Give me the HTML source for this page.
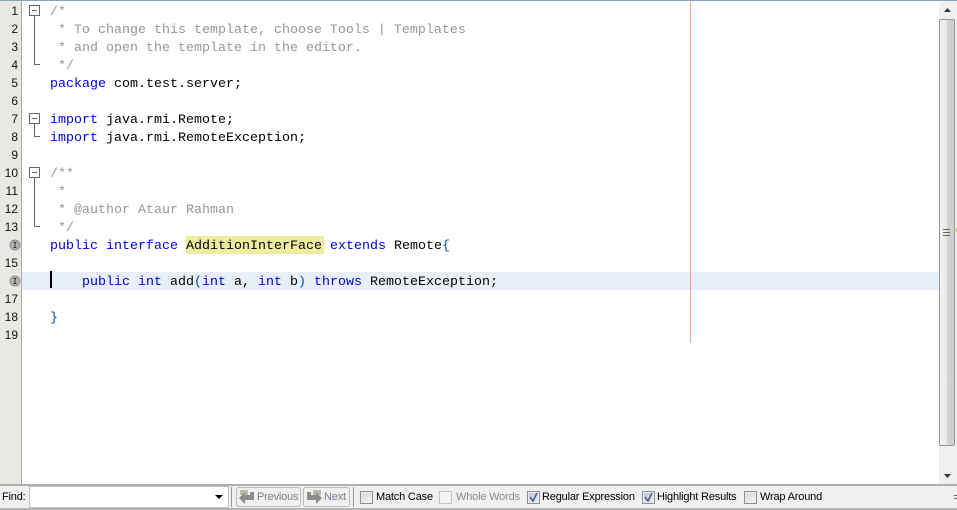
<!DOCTYPE html>
<html><head><meta charset="utf-8">
<style>
html,body{margin:0;padding:0;width:957px;height:510px;overflow:hidden;background:#fff}
#r{position:relative;width:957px;height:510px;overflow:hidden}
.a{position:absolute}
.l{position:absolute;left:50px;height:18px;font:13.333px/18px "Liberation Mono",monospace;white-space:pre;color:#000}
.n{position:absolute;left:0;width:18px;text-align:right;font:12px/18px "Liberation Sans",sans-serif;color:#111}
.k{color:#0000e6}.c{color:#969696}.p{color:#0050a0}
.t{position:absolute;top:490px;font:11px/14px "Liberation Sans",sans-serif;letter-spacing:-.18px;color:#000;white-space:pre}
.cb{position:absolute;top:491px;width:11px;height:11px;border:1px solid #8e8f8f;background:linear-gradient(135deg,#d4d4d2,#f6f6f6);box-shadow:inset 0 0 0 1px #ececec}
.on{background:linear-gradient(135deg,#b9c4da,#e9edf5)}
</style></head><body><div id="r">
<div class="a" style="left:0;top:0;width:957px;height:1px;background:#8aa3bd"></div>
<div class="a" style="left:0;top:1px;width:21px;height:483px;background:#e9e9e4"></div>
<div class="a" style="left:21px;top:1px;width:1px;height:483px;background:#a9a9a5"></div>
<div class="a" style="left:22px;top:272px;width:917px;height:18px;background:#e9eff8"></div>
<div class="a" style="left:690px;top:1px;width:1px;height:342px;background:#ff9a9a"></div>
<div class="a" style="left:186px;top:236px;width:138px;height:18px;background:#eded9f"></div>
<div class="a" style="left:50px;top:271px;width:2px;height:17px;background:#000"></div>

<div class="n" style="top:2px">1</div><div class="n" style="top:20px">2</div><div class="n" style="top:38px">3</div><div class="n" style="top:56px">4</div><div class="n" style="top:74px">5</div><div class="n" style="top:92px">6</div><div class="n" style="top:110px">7</div><div class="n" style="top:128px">8</div><div class="n" style="top:146px">9</div><div class="n" style="top:164px">10</div><div class="n" style="top:182px">11</div><div class="n" style="top:200px">12</div><div class="n" style="top:218px">13</div><div class="n" style="top:254px">15</div><div class="n" style="top:290px">17</div><div class="n" style="top:308px">18</div><div class="n" style="top:326px">19</div>

<svg class="a" style="left:0;top:0" width="50" height="300" shape-rendering="crispEdges">
<g fill="none" stroke="#666">
<rect x="29.500" y="5.500" width="10" height="10" fill="#fff"/><path d="M32 10.500h5M34.500 16v48.500H40"/>
<rect x="29.500" y="113.500" width="10" height="10" fill="#fff"/><path d="M32 118.500h5M34.500 124v12.500H40"/>
<rect x="29.500" y="167.500" width="10" height="10" fill="#fff"/><path d="M32 172.500h5M34.500 178v48.500H40"/>
</g></svg>
<svg class="a" style="left:0;top:0" width="22" height="300">
<g><circle cx="15" cy="245" r="5" fill="#b4b4b4" stroke="#8a8a8a"/><path d="M13.500 242.500h3M15 242.500v5M13.500 247.500h3" stroke="#333" fill="none"/>
<circle cx="15" cy="281" r="5" fill="#b4b4b4" stroke="#8a8a8a"/><path d="M13.500 278.500h3M15 278.500v5M13.500 283.500h3" stroke="#333" fill="none"/></g></svg>

<div class="l c" style="top:4px">/*</div>
<div class="l c" style="top:22px"> * To change this template, choose Tools | Templates</div>
<div class="l c" style="top:40px"> * and open the template in the editor.</div>
<div class="l c" style="top:58px"> */</div>
<div class="l" style="top:76px"><span class="k">package</span> com.test.server;</div>
<div class="l" style="top:112px"><span class="k">import</span> java.rmi.Remote;</div>
<div class="l" style="top:130px"><span class="k">import</span> java.rmi.RemoteException;</div>
<div class="l c" style="top:166px">/**</div>
<div class="l c" style="top:184px"> *</div>
<div class="l c" style="top:202px"> * @author Ataur Rahman</div>
<div class="l c" style="top:220px"> */</div>
<div class="l" style="top:238px"><span class="k">public interface</span> AdditionInterFace <span class="k">extends</span> Remote<span class="p">{</span></div>
<div class="l" style="top:274px">    <span class="k">public int</span> add<span class="p">(</span><span class="k">int</span> a, <span class="k">int</span> b<span class="p">)</span> <span class="k">throws</span> RemoteException;</div>
<div class="l p" style="top:310px">}</div>

<!-- scrollbar -->
<div class="a" style="left:939px;top:1px;width:18px;height:483px;background:#f0f0f0"></div>
<div class="a" style="left:939px;top:19px;width:16px;height:427px;box-sizing:border-box;border:1px solid #979797;border-radius:2px;background:linear-gradient(90deg,#f1f1f1 0,#ebebeb 45%,#d2d2d4 55%,#cfcfd1 100%)"></div>
<div class="a" style="left:943px;top:229px;width:7px;height:1px;background:#666"></div>
<div class="a" style="left:943px;top:232px;width:7px;height:1px;background:#666"></div>
<div class="a" style="left:943px;top:235px;width:7px;height:1px;background:#666"></div>
<svg class="a" style="left:939px;top:0" width="18" height="484">
<path d="M5 12h7l-3.500-4z" fill="#333"/><path d="M5 474h7l-3.500 4z" fill="#333"/></svg>
<div class="a" style="left:956px;top:228px;width:1px;height:4px;background:#c4c44a"></div>

<!-- find bar -->
<div class="a" style="left:0;top:484px;width:957px;height:26px;background:#f0f0f0"></div>
<div class="a" style="left:0;top:484px;width:957px;height:2px;background:#b0b0b0"></div>
<div class="a" style="left:0;top:508px;width:957px;height:2px;background:#b4b4b4"></div>
<div class="t" style="left:2px">Find:</div>
<div class="a" style="left:29px;top:486px;width:200px;height:22px;box-sizing:border-box;background:#fff;border:1px solid #c0c0c0"></div>
<svg class="a" style="left:215px;top:494px" width="10" height="6"><path d="M0 1h8L4 5z" fill="#000"/></svg>
<div class="a" style="left:231px;top:487px;width:1px;height:20px;background:#999"></div>
<div class="a" style="left:353px;top:487px;width:1px;height:20px;background:#999"></div>
<div class="a" style="left:236px;top:487px;width:65px;height:20px;box-sizing:border-box;border:1px solid #bbb;border-radius:3px"></div>
<div class="a" style="left:303px;top:487px;width:47px;height:20px;box-sizing:border-box;border:1px solid #bbb;border-radius:3px"></div>
<svg class="a" style="left:238px;top:488px" width="18" height="18"><path d="M2 2h8v5H2z" fill="#b3bda8"/><path d="M1 10l6-6v3h5V4h4v8h-5v0H7v4z" fill="#8c8c8c"/></svg>
<svg class="a" style="left:305px;top:488px" width="18" height="18"><path d="M8 2h8v5H8z" fill="#b3bda8"/><path d="M17 10l-6-6v3H6V4H2v8h5v0h4v4z" fill="#8c8c8c"/></svg>
<div class="t" style="left:257px;color:#7d7d8c">Previous</div>
<div class="t" style="left:324px;color:#7d7d8c">Next</div>

<div class="cb" style="left:360px"></div><div class="t" style="left:376px">Match Case</div>
<div class="cb" style="left:439px;border-color:#c4c4c4;background:#f4f4f4;box-shadow:none"></div><div class="t" style="left:456px;color:#8a8a8a">Whole Words</div>
<div class="cb on" style="left:527px"></div><div class="t" style="left:542px">Regular Expression</div>
<div class="cb on" style="left:642px"></div><div class="t" style="left:657px">Highlight Results</div>
<div class="cb" style="left:744px"></div><div class="t" style="left:760px">Wrap Around</div>
<svg class="a" style="left:527px;top:491px" width="130" height="13"><path d="M3 6l3 4 4-8" fill="none" stroke="#4a5f8c" stroke-width="1.600"/><path d="M118 6l3 4 4-8" fill="none" stroke="#4a5f8c" stroke-width="1.600"/></svg>
<div class="a" style="left:954px;top:495px;width:3px;height:1px;background:#666"></div>
<div class="a" style="left:954px;top:498px;width:3px;height:1px;background:#666"></div>
</div></body></html>
